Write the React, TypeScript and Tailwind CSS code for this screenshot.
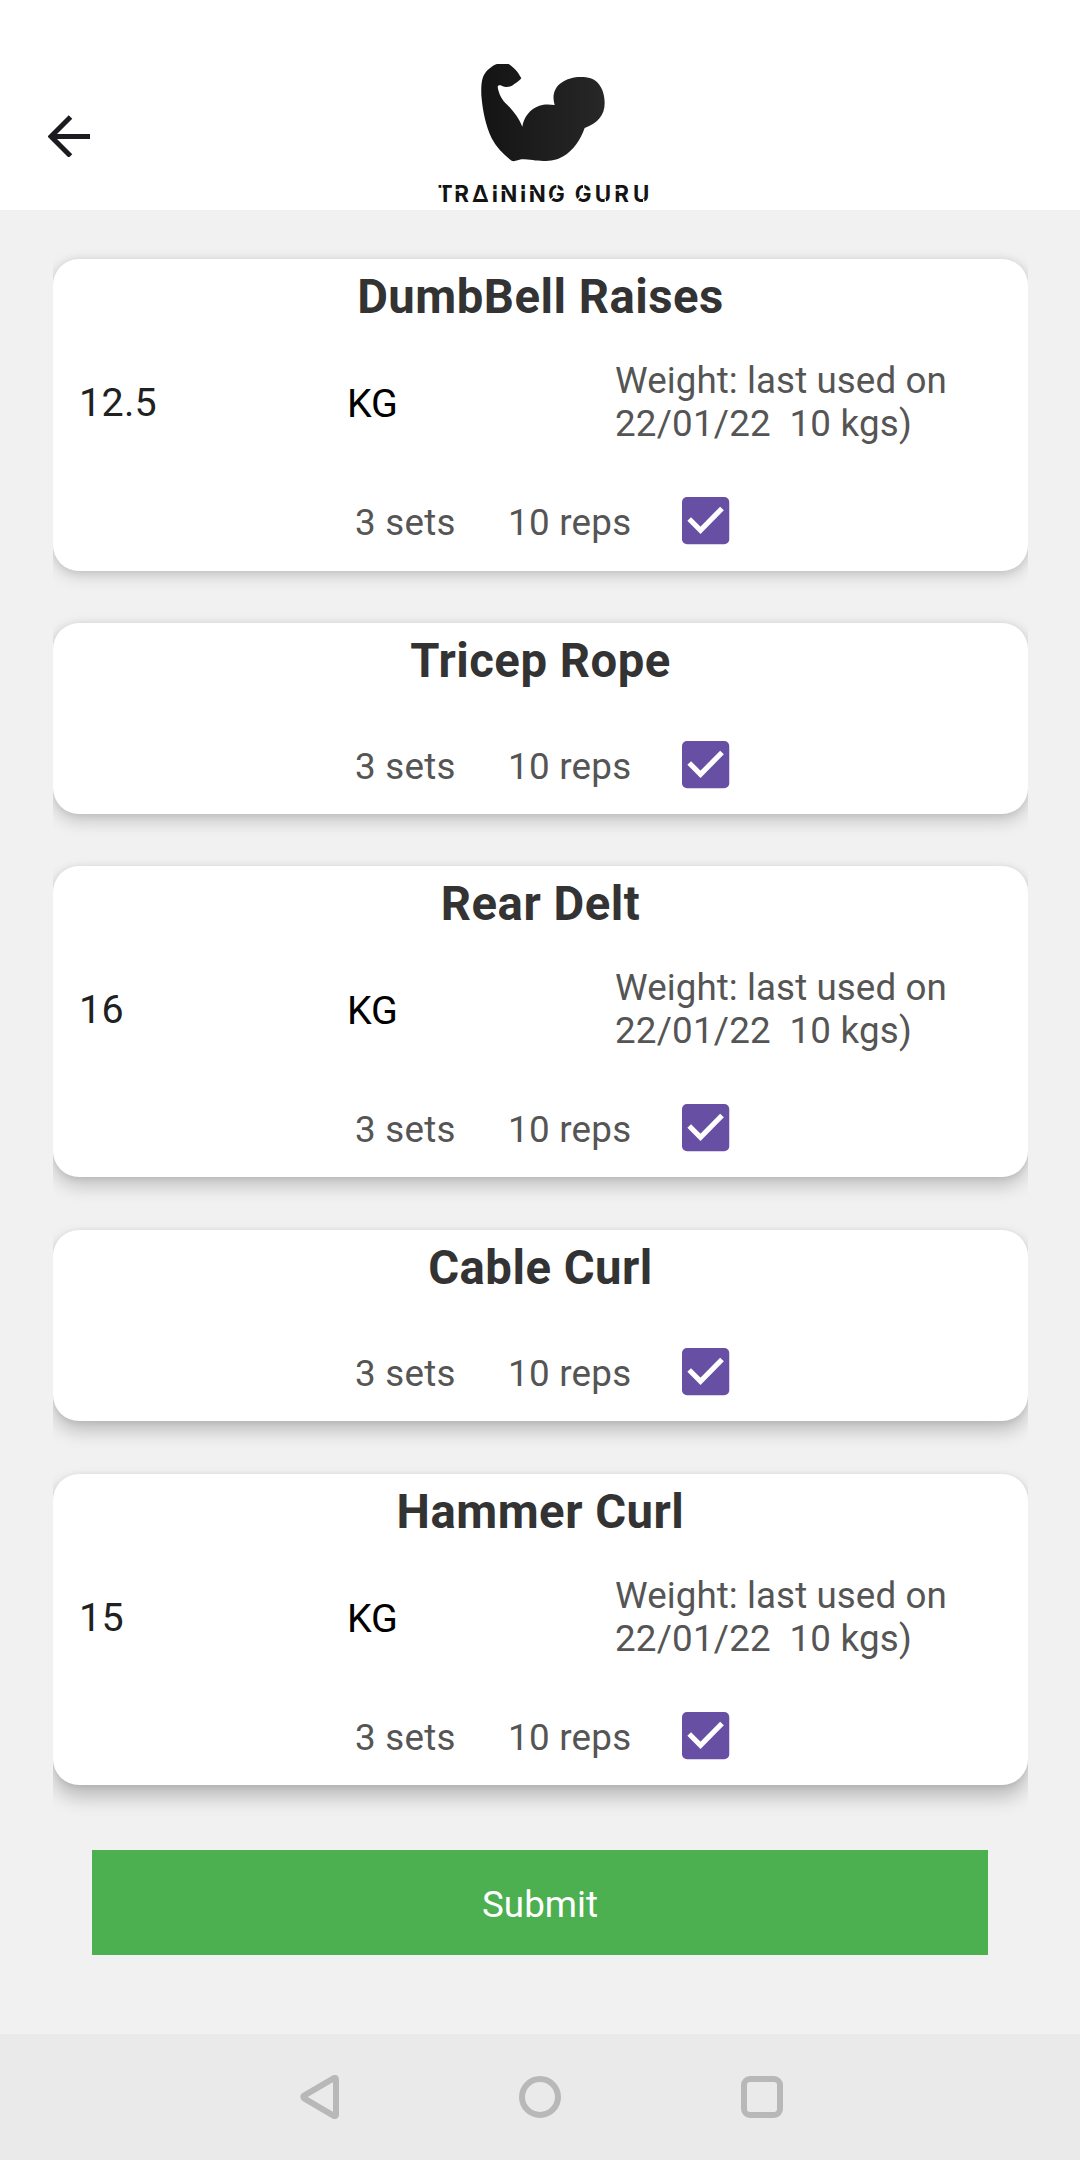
const exercises = [
  { name: 'DumbBell Raises', weight: '12.5', card: 'h-[312px]', shadow: 'shadow-[0_5px_16px_rgba(0,0,0,0.16),0_1px_9px_rgba(0,0,0,0.09)]' },
  { name: 'Tricep Rope', weight: null, card: 'mt-[52px] h-[191px]', shadow: 'shadow-[0_7px_17px_rgba(0,0,0,0.18),0_1px_8px_rgba(0,0,0,0.09)]' },
  { name: 'Rear Delt', weight: '16', card: 'mt-[52px] h-[311px]', shadow: 'shadow-[0_9px_18px_rgba(0,0,0,0.20),0_1px_7px_rgba(0,0,0,0.09)]' },
  { name: 'Cable Curl', weight: null, card: 'mt-[53px] h-[191px]', shadow: 'shadow-[0_10px_18px_rgba(0,0,0,0.21),0_1px_6px_rgba(0,0,0,0.09)]' },
  { name: 'Hammer Curl', weight: '15', card: 'mt-[53px] h-[311px]', shadow: 'shadow-[0_12px_19px_rgba(0,0,0,0.23),0_1px_6px_rgba(0,0,0,0.09)]' },
];

function BackArrow() {
  return (
    <svg width="42" height="42" viewBox="0 0 42 42" fill="none" stroke="#1c1b1f" strokeWidth="5">
      <path d="M42 21.5H4M22.5 2L3 21.5L22.5 41" />
    </svg>
  );
}

function Logo() {
  return (
    <svg width="250" height="170" viewBox="0 0 750 510" role="img" aria-label="Training Guru">
      <defs>
        <linearGradient id="arm" x1="0" y1="0" x2="1" y2="0">
          <stop offset="0" stopColor="#141414" />
          <stop offset="1" stopColor="#272727" />
        </linearGradient>
      </defs>
      <path
        fill="url(#arm)"
        d="M231 72H266C277 79 288 90 294 98C297 104 301 109 304 115C298 122 284 132 276 137C266 142 254 142 245 137C240 135 235 135 233 140C235 155 241 172 256 189C276 207 296 233 307 260C311 232 330 206 358 197C373 192 389 193 404 195C396 170 402 145 420 131C440 116 462 111 482 111C505 111 521 116 533 128C547 143 554 165 554 189C554 226 533 250 494 264C481 300 460 331 430 349C410 361 393 363 370 363C348 363 330 358 304 358C295 359 288 365 276 363C251 345 229 322 215 295C197 257 188 214 184 166C183 132 185 110 200 93C210 84 220 75 231 72Z"
      />
      <text
        x="53 103 156 215 241 300 326 384 440 464 524 583 639"
        y="486"
        fontSize="67"
        fontWeight="700"
        fill="#141414"
        className="font-['Inter',sans-serif]"
      >
        TRAINING&nbsp;GURU
      </text>
      {/* stencil cuts through the lettering */}
      <g fill="none" stroke="#fff" strokeWidth="4">
        <path d="M66 434V448" />
        <path d="M103 450H120M583 450H600" />
        <path d="M215 450H232M300 450H317" />
        <path d="M241 451H257M326 451H342" />
        <path d="M411 434V448M390 481L404 468M491 434V448M470 481L484 468" />
        <path d="M556 476V490M671 476V490" />
      </g>
      <path d="M181 453L194 477H168Z" fill="#fff" />
      <path d="M162 481.5H202" stroke="#141414" strokeWidth="9" />
    </svg>
  );
}

function Checkbox() {
  return (
    <svg width="48" height="48" viewBox="0 0 48 48">
      <rect width="47.25" height="47.25" rx="5" fill="#6750a4" />
      <path d="M7.2 22L18.5 33.3L40 11.5" fill="none" stroke="#fff" strokeWidth="5.2" />
    </svg>
  );
}

function ExerciseCard({ name, weight, card, shadow }: (typeof exercises)[number]) {
  return (
    <section className={`${card} ${shadow} flex shrink-0 flex-col rounded-[26px] bg-white`}>
      <h2 className="pt-[10px] text-center text-[47.25px] leading-[56px] font-bold tracking-[0.5px] text-[#333]">{name}</h2>
      {weight && (
        <div className="grid h-[120px] grid-cols-[268px_268px_1fr] items-center pt-[34px] pl-[26px] text-[39.4px]">
          <span className="pb-[3px] leading-[46px] tracking-[0.3px] text-[#212121]">{weight}</span>
          <span className="leading-[46px] text-black">KG</span>
          <p className="pb-[4px] text-[36.75px] leading-[43px] whitespace-pre text-[#555]">
            <span className="block tracking-[0.08px]">Weight: last used on</span>
            <span className="block tracking-[0.2px]">{'22/01/22  10 kgs)'}</span>
          </p>
        </div>
      )}
      <div className="mt-[52px] flex h-[48px] items-center pl-[302px] text-[36.75px] leading-[43px] tracking-[0.25px] text-[#555]">
        <span className="w-[153px] pt-[3px]">3 sets</span>
        <span className="w-[174px] pt-[3px]">10 reps</span>
        <Checkbox />
      </div>
    </section>
  );
}

export default function App() {
  return (
    <div className="flex h-[2160px] w-[1080px] flex-col bg-[#f1f1f1] font-['Roboto',sans-serif]">
      <header className="grid h-[210px] shrink-0 grid-cols-[420px_250px_1fr] bg-white pt-[40px]">
        <button className="ml-[48px] mt-[75px] h-[42px] w-[42px]" aria-label="Back">
          <BackArrow />
        </button>
        <Logo />
      </header>
      <main className="flex flex-1 flex-col">
        <div className="mr-[52px] ml-[53px] flex flex-col overflow-x-clip pt-[49px]">
          {exercises.map((e) => (
            <ExerciseCard key={e.name} {...e} />
          ))}
        </div>
        <button className="mx-[92px] mt-[65px] h-[105px] bg-[#4caf50] pt-[4px] text-[36.75px] text-white">Submit</button>
      </main>
      <nav className="h-[126px] shrink-0 bg-[#eaeaea]">
        <div className="flex h-full items-center justify-between pr-[297px] pl-[300px]">
          <svg width="39" height="44" viewBox="0 0 39 44" fill="none" stroke="#b8b8b8" strokeWidth="6" strokeLinejoin="round">
            <path d="M36 4.5Q36 2 33.5 3.4L4.5 20.4Q2 22 4.5 23.6L33.5 40.6Q36 42 36 39.5Z" />
          </svg>
          <svg width="42" height="42" viewBox="0 0 42 42" fill="none" stroke="#b8b8b8" strokeWidth="6">
            <circle cx="21" cy="21" r="18" />
          </svg>
          <svg width="42" height="42" viewBox="0 0 42 42" fill="none" stroke="#b8b8b8" strokeWidth="6">
            <rect x="3" y="3" width="36" height="36" rx="6" />
          </svg>
        </div>
      </nav>
    </div>
  );
}
